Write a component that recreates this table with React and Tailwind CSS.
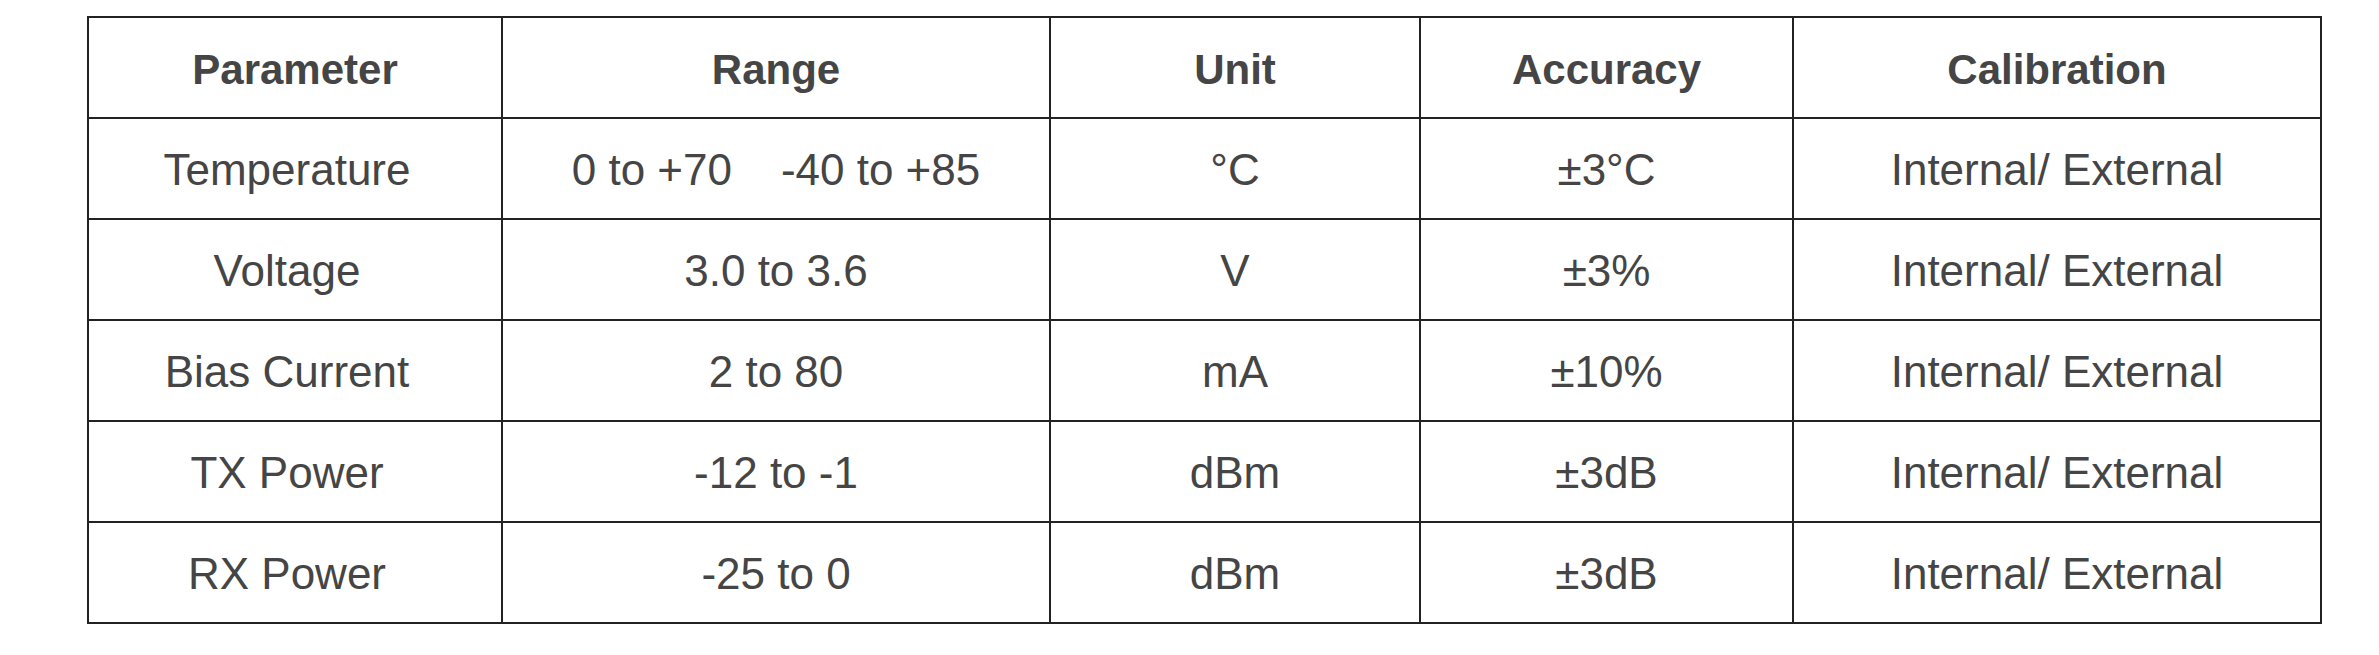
import React from "react";

const rows = [
	["Temperature", "0 to +70\u00a0\u00a0\u00a0\u00a0-40 to +85", "°C", "±3°C", "Internal/ External"],
	["Voltage", "3.0 to 3.6", "V", "±3%", "Internal/ External"],
	["Bias Current", "2 to 80", "mA", "±10%", "Internal/ External"],
	["TX Power", "-12 to -1", "dBm", "±3dB", "Internal/ External"],
	["RX Power", "-25 to 0", "dBm", "±3dB", "Internal/ External"],
];

const headers = ["Parameter", "Range", "Unit", "Accuracy", "Calibration"];

function App() {
	return (
		<div className="w-[2379px] h-[655px] bg-white pl-[87px] pt-[16px] font-['Liberation_Sans',Arial,sans-serif] text-[#454545]">
			<table className="table-fixed border-collapse w-[2235px]">
				<colgroup>
					<col className="w-[414px]" />
					<col className="w-[548px]" />
					<col className="w-[370px]" />
					<col className="w-[373px]" />
					<col className="w-[528px]" />
				</colgroup>
				<thead>
					<tr className="h-[101px]">
						{headers.map((h) => (
							<th
								key={h}
								className="border-2 border-[#222] text-center align-middle text-[42px] font-bold p-0 pt-[4px]">
								{h}
							</th>
						))}
					</tr>
				</thead>
				<tbody>
					{rows.map((r) => (
						<tr key={r[0]} className="h-[101px]">
							{r.map((c, i) => (
								<td
									key={i}
									className={`border-2 border-[#222] text-center align-middle text-[44px] p-0 pt-[3px] whitespace-pre ${i === 0 ? "pr-[16px]" : ""}`}>
									{c}
								</td>
							))}
						</tr>
					))}
				</tbody>
			</table>
		</div>
	);
}

export default App;
